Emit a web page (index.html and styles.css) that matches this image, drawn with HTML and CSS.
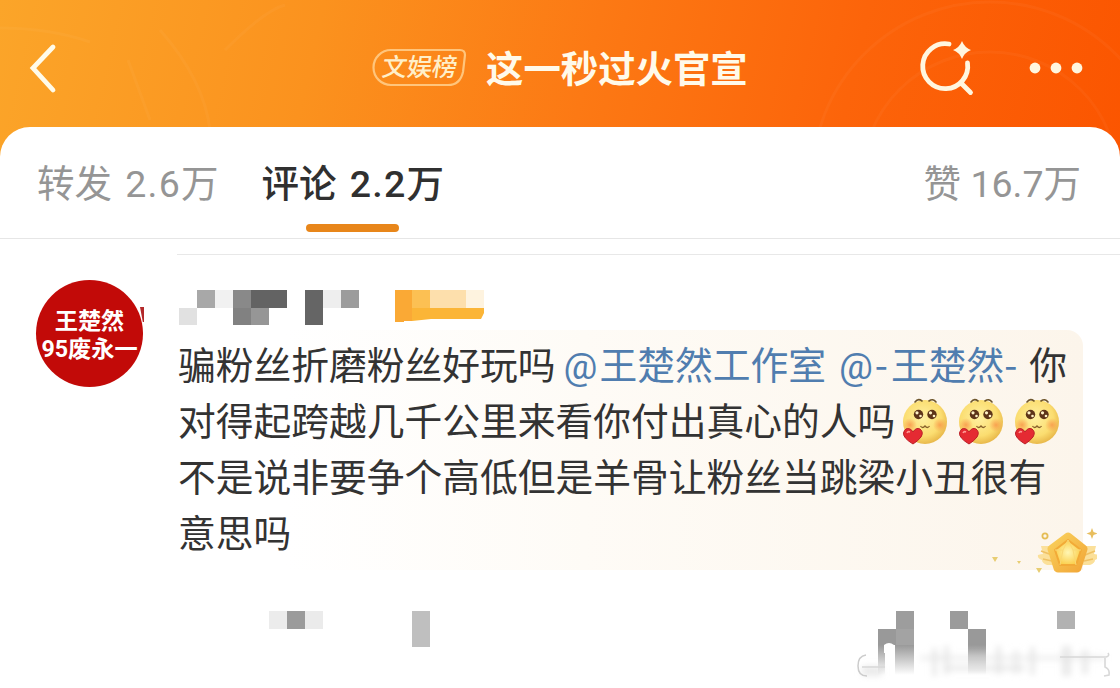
FILE: index.html
```html
<!DOCTYPE html>
<html lang="zh-CN">
<head>
<meta charset="UTF-8">
<meta name="viewport" content="width=device-width, initial-scale=1.0">
<title>评论</title>
<link rel="stylesheet" href="styles.css">
</head>
<body>
    <header class="topbar">
        <svg class="rings" viewBox="0 0 1120 176" fill="none" stroke="#fff" stroke-opacity=".035" stroke-width="3">
            <circle cx="990" cy="180" r="178"/>
            <circle cx="990" cy="180" r="128"/>
            <path d="M0 28q50 0 90 14M160 30q44 50 50 100M128 60l22 60M225 50q40-40 60-45"/>
        </svg>
        <svg class="back" width="40" height="56" viewBox="0 0 40 56">
            <path d="M29 7L9 28l20 22" fill="none" stroke="#fffbe9" stroke-width="4.800" stroke-linecap="round" stroke-linejoin="miter"/>
        </svg>
        <div class="title">
            <span class="badge">
                <svg width="98" height="42" viewBox="0 0 98 42">
                    <path d="M20 3H89q5 0 5 5L92 25Q89 38 77 38H20A17.500 17.500 0 0 1 20 3Z" fill="none" stroke="#ffc57c" stroke-width="2.200"/>
                </svg>
                <b>文娱榜</b>
            </span>
            <h1>这一秒过火官宣</h1>
        </div>
        <div class="actions">
            <svg width="60" height="60" viewBox="0 0 60 60">
                <path d="M31 7A22.500 22.500 0 1 0 49.500 26M43 46L52.500 55.500" transform="translate(0 -1)" fill="none" stroke="#fff6df" stroke-width="4.800" stroke-linecap="round"/>
                <path d="M44 3Q46.500 9.500 53 12Q46.500 14.500 44 21Q41.500 14.500 35 12Q41.500 9.500 44 3Z" fill="#fff6df"/>
            </svg>
            <svg width="56" height="16" viewBox="0 0 56 16" fill="#fff6df">
                <circle cx="7" cy="8" r="5.400"/>
                <circle cx="28" cy="8" r="5.400"/>
                <circle cx="49" cy="8" r="5.400"/>
            </svg>
        </div>
    </header>

    <main class="sheet">
        <nav class="tabs">
            <a class="tab">转发 <span>2.6</span>万</a>
            <a class="tab active">评论 <span>2.2</span>万</a>
            <a class="tab likes">赞 16.7万</a>
        </nav>

        <article class="comment">
            <div class="avatar">
                <span>王楚然</span>
                <span>95废永一</span>
            </div>
            <div class="body">
                <svg class="name" width="330" height="40" viewBox="0 0 330 40" shape-rendering="crispEdges">
                    <path d="M0 18h18v17H0z" fill="#e1e1e1"/>
                    <path d="M18 0h18v18H18z" fill="#a8a8a8"/>
                    <path d="M36 0h18v18H36z" fill="#f1f1f1"/>
                    <path d="M54 0h18v18H54z" fill="#898989"/>
                    <path d="M54 18h18v17H54z" fill="#818181"/>
                    <path d="M72 0h36v18H72z" fill="#636363"/>
                    <path d="M72 18h18v17H72z" fill="#969696"/>
                    <path d="M126 0h18v35h-18z" fill="#656565"/>
                    <path d="M144 0h18v18h-18z" fill="#eee"/>
                    <path d="M162 0h18v18h-18z" fill="#9c9c9c"/>
                    <path d="M216 0h17v31l-17 1z" fill="#faa935"/>
                    <path d="M233 0h18v18h-18z" fill="#fcc053"/>
                    <path d="M251 0h36v18h-36z" fill="#fddfac"/>
                    <path d="M287 0h18v18h-18z" fill="#fef3df"/>
                    <path d="M233 18h72v5l-3 6h-50l-19 2z" fill="#fbb537" shape-rendering="auto"/>
                </svg>
                <p class="text">骗粉丝折磨粉丝好玩吗<a class="at first"><i>@</i>王楚然工作室</a><a class="at second"><i>@</i><s>-</s>王楚然<s>-</s></a>你<br>对得起跨越几千公里来看你付出真心的人吗<span class="faces"><svg><use href="#face"/></svg><svg><use href="#face"/></svg><svg><use href="#face"/></svg></span><br>不是说非要争个高低但是羊骨让粉丝当跳梁小丑很有<br>意思吗</p>
                <svg class="medal" width="120" height="60" viewBox="0 0 120 60">
                    <defs>
                        <linearGradient id="gold" x1="0" y1="0" x2="1" y2="1">
                            <stop offset="0" stop-color="#f9cf5b"/>
                            <stop offset="1" stop-color="#f2a93a"/>
                        </linearGradient>
                        <radialGradient id="gem">
                            <stop offset="0" stop-color="#fff6b4"/>
                            <stop offset="1" stop-color="#fbd04f"/>
                        </radialGradient>
                    </defs>
                    <path d="M64 24h13v19H70q-5-2-5-5 -5-2-4-5 3-1 5-1zM119 24h-13v19h7q5-2 5-5 5-2 4-5-3-1-5-1z" fill="#fbe09a"/>
                    <path d="M64 29l11 4M66 37l9 2M118 29l-10 4M116 37l-9 2" stroke="#efc164" stroke-width="1.500"/>
                    <path d="M91 15L106 27L100 46H81L75 27Z" fill="url(#gold)" stroke="url(#gold)" stroke-width="9" stroke-linejoin="round"/>
                    <path d="M91 18L104 28L99 43H83L78 28Z" fill="url(#gem)" stroke="#f2aa37" stroke-width="2" stroke-linejoin="round"/>
                    <path d="M91 18l-5 10-8 0M91 18l5 10 8 0M86 28l-3 15M96 28l3 15" stroke="#f9d874" stroke-width="1" fill="none"/>
                    <circle cx="68" cy="14" r="2.600" fill="none" stroke="#e5bd55" stroke-width="1.800"/>
                    <path d="M115 6l1.500 4 4 1.500-4 1.500-1.500 4-1.500-4-4-1.500 4-1.500z" fill="#e8be5e"/>
                    <path d="M15 35h6l-3 5zM59 46h6l-3 5zM40 39h4l-2 3z" fill="#e8cd72"/>
                </svg>
            </div>
        </article>

        <svg class="meta" width="1120" height="88" viewBox="0 0 1120 88">
            <defs>
                <linearGradient id="fade" x1="0" y1="0" x2="0" y2="1">
                    <stop offset="0" stop-color="#999"/>
                    <stop offset="1" stop-color="#999" stop-opacity="0"/>
                </linearGradient>
                <filter id="soft" x="-20%" y="-20%" width="140%" height="140%"><feGaussianBlur stdDeviation="3"/></filter>
            </defs>
            <path d="M269 11h18v18h-18z" fill="#ececec"/>
            <path d="M287 11h18v18h-18z" fill="#9b9b9b"/>
            <path d="M305 11h18v18h-18z" fill="#ebebeb"/>
            <path d="M412 11h18v36h-18z" fill="#bfbfbf"/>
            <path d="M878 29h18v16h-18z" fill="#999"/>
            <path d="M896 11h18v18h-18z" fill="#9d9d9d"/>
            <path d="M896 29h18v16h-18z" fill="#a3a3a3"/>
            <path d="M950 11h18v18h-18z" fill="#9b9b9b"/>
            <path d="M968 29h18v16h-18z" fill="#999"/>
            <path d="M1057 11h18v18h-18z" fill="#b2b2b2"/>
            <path d="M878 45h7v30h-7zM895 45h19v30h-19zM968 45h18v30h-18z" fill="url(#fade)"/>
            <g filter="url(#soft)" fill="#dcdcdc">
                <path d="M862 66h20v10h-20zM932 48h5v28h-5zM944 46h5v28h-5zM996 46h5v28h-5zM1014 50h4v24h-4zM1030 47h5v28h-5zM1062 46h9v30h-9zM1082 50h6v24h-6z" opacity=".6"/>
                <path d="M920 56h185v4H920zM945 65h80v6h-80z" opacity=".5"/>
            </g>
            <path d="M866 55q-8 1-8 11t9 10" fill="none" stroke="#ccc" stroke-width="1.500"/>
            <path d="M884 45q5-4 10 0v8h-10z" fill="#fff"/>
            <path d="M862 67h23M1060 57h46q4-1 2-4M1105 58v9q5 2 4 8l-5 1" fill="none" stroke="#d8d8d8" stroke-width="1.600"/>
        </svg>
    </main>

    <!-- shared emoji -->
    <svg class="sprite">
        <defs>
            <radialGradient id="skin" cx=".45" cy=".4" r=".6">
                <stop offset="0" stop-color="#fff0a0"/>
                <stop offset=".7" stop-color="#fbdd70"/>
                <stop offset="1" stop-color="#e9b94b"/>
            </radialGradient>
            <radialGradient id="blush">
                <stop offset="0" stop-color="#f89448" stop-opacity=".8"/>
                <stop offset="1" stop-color="#f89448" stop-opacity="0"/>
            </radialGradient>
            <symbol id="face" viewBox="0 0 50 50">
                <circle cx="26" cy="26" r="22" fill="url(#skin)"/>
                <circle cx="11" cy="29" r="7" fill="url(#blush)"/>
                <circle cx="41" cy="29" r="7" fill="url(#blush)"/>
                <path d="M16 6q3-4 7-1M30 5q4-3 7 1" fill="none" stroke="#6d552b" stroke-width="1.600" stroke-linecap="round"/>
                <circle cx="19.500" cy="18.500" r="4.700" fill="#5d3419"/>
                <circle cx="33" cy="18.500" r="4.700" fill="#5d3419"/>
                <g fill="#fff3c8">
                    <circle cx="18" cy="16.800" r="1.600"/><circle cx="21.500" cy="20" r="1.300"/>
                    <circle cx="31.500" cy="16.800" r="1.600"/><circle cx="35" cy="20" r="1.300"/>
                </g>
                <path d="M21.500 30q2 3 4.500 0 2.500 3 4.500 0" fill="none" stroke="#87602b" stroke-width="1.300"/>
                <path d="M14 48Q4 42 4.500 37Q6 31 11 33Q13 34 14 36Q17 31 21 33Q25 36 22 41Q19 45 14 48Z" fill="#e52a32" stroke="#bb1f27"/>
                <path d="M8 37q1-2 3-1" stroke="#ff9a94" stroke-width="1.600" fill="none"/>
            </symbol>
        </defs>
    </svg>
</body>
</html>
```
FILE: styles.css
```css
* {
    box-sizing: border-box;
}

body {
    margin: 0;
    height: 688px;
    overflow: hidden;
    background: linear-gradient(103deg, #fba529 0, #fb921e 28%, #fc7914 52%, #fc640a 75%, #fb5500 100%) 0 0 / 100% 176px no-repeat #fff;
    font-family: Roboto, "Noto Sans CJK SC", sans-serif;
    color: #333;
}

.topbar {
    position: relative;
    height: 127px;
    padding: 9px 36px 0 24px;
    display: grid;
    grid-template-columns: 347px auto 1fr;
    align-items: center;
}

.rings {
    position: absolute;
    top: 0;
    left: 0;
    width: 1120px;
    height: 176px;
}

.back,
.title,
.actions {
    position: relative;
}

.title {
    display: flex;
    align-items: center;
    gap: 17px;
}

.badge {
    display: grid;
    place-items: center;
    width: 98px;
    height: 42px;
}

.badge > * {
    grid-area: 1 / 1;
}

.badge b {
    font-size: 25px;
    line-height: 30px;
    font-weight: 500;
    color: #ffefc9;
    transform: skewX(-8deg);
}

h1 {
    margin: 0;
    padding-top: 3px;
    font-size: 37.4px;
    line-height: 50px;
    font-weight: 700;
    color: #fffaea;
}

.actions {
    display: flex;
    align-items: center;
    justify-content: flex-end;
    gap: 50px;
}

.sheet {
    position: relative;
    height: 561px;
    background: #fff;
    border-radius: 30px 30px 0 0;
}

.tabs {
    display: flex;
    height: 112px;
    padding: 0 39px 0 37px;
    border-bottom: 1px solid #e6e6e6;
}

.tab {
    position: relative;
    padding-top: 30px;
    margin-right: 43px;
    font-size: 37.5px;
    line-height: 54px;
    font-weight: 400;
    color: #959595;
    white-space: nowrap;
}

.tab span {
    margin-left: 4px;
    letter-spacing: 1.2px;
}

.active {
    font-weight: 500;
    color: #303030;
}

.active::after {
    content: "";
    position: absolute;
    left: 45px;
    top: 97px;
    width: 93px;
    height: 8px;
    border-radius: 4px;
    background: #e8861a;
}

.likes {
    margin: 0 0 0 auto;
}

.comment {
    display: flex;
    gap: 34px;
    height: 361px;
    padding-left: 36px;
}

.avatar {
    position: relative;
    display: flex;
    flex-direction: column;
    align-items: center;
    justify-content: center;
    width: 107px;
    height: 107px;
    margin-top: 41px;
    padding-top: 3px;
    border-radius: 50%;
    background: #c20a08;
    color: #fff;
    font-size: 23.2px;
    line-height: 28px;
    font-weight: 700;
    white-space: nowrap;
}

/* sliver of the square behind the round photo */
.avatar::after {
    content: "";
    position: absolute;
    right: -1px;
    top: 27px;
    width: 4px;
    height: 15px;
    background: #b3282a;
    clip-path: polygon(0 0, 100% 0, 100% 100%, 70% 100%);
}

.body {
    position: relative;
    width: 943px;
    margin-top: 15px;
    border-top: 1px solid #e8e8e8;
}

.name {
    display: block;
    margin: 35px 0 0 2px;
}

.text {
    margin: 0;
    height: 240px;
    width: 906px;
    padding: 5px 0 0 1px;
    border-radius: 0 16px 0 0;
    background: linear-gradient(90deg, #fff 12%, #fefbf6 45%, #fcf5eb 100%);
    font-family: "Noto Sans CJK SC", sans-serif;
    font-size: 37.75px;
    line-height: 56px;
    white-space: nowrap;
}

.at {
    color: #507daf;
}

.at i {
    font-style: normal;
    font-family: Roboto, sans-serif;
    line-height: 0;
    letter-spacing: 2px;
}

.at s {
    text-decoration: none;
    letter-spacing: 3px;
}

.first {
    margin: 0 13px 0 8px;
}

.second {
    margin-right: 9px;
}

.faces {
    display: inline-flex;
    gap: 6px;
    height: 50px;
    margin: -6px 0 -6px 4px;
    vertical-align: -11px;
}

.faces svg {
    width: 50px;
    height: 50px;
}

/* hangs over the lower right corner of the tinted panel */
.medal {
    position: absolute;
    right: 23px;
    bottom: 18px;
}

.meta {
    display: block;
}

.sprite {
    position: absolute;
    width: 0;
    height: 0;
}
```
